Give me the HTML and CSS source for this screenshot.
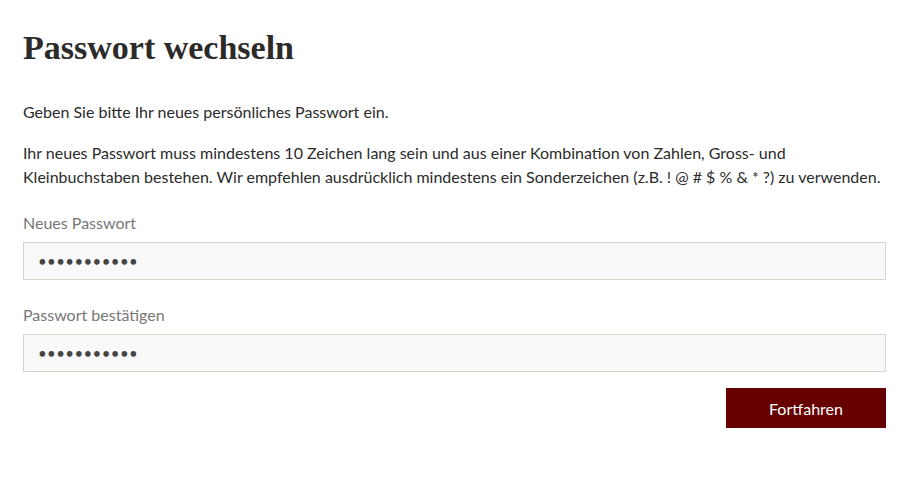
FILE: index.html
```html
<!DOCTYPE html>
<html lang="de">
<head>
<meta charset="utf-8">
<title>Passwort wechseln</title>
<link rel="stylesheet" href="styles.css">
</head>
<body>
<main class="page">
  <h1 class="title">Passwort wechseln</h1>
  <p class="intro">Geben Sie bitte Ihr neues persönliches Passwort ein.</p>
  <p class="rules">Ihr neues Passwort muss mindestens 10 Zeichen lang sein und aus einer Kombination von Zahlen, Gross- und Kleinbuchstaben bestehen. Wir empfehlen ausdrücklich mindestens ein Sonderzeichen (z.B. ! @ # $ % &amp; * ?) zu verwenden.</p>
  <form class="form">
    <label class="field">
      <span class="label">Neues Passwort</span>
      <input class="input" type="password" value="abcdefghijk">
    </label>
    <label class="field">
      <span class="label">Passwort bestätigen</span>
      <input class="input" type="password" value="abcdefghijk">
    </label>
    <div class="actions">
      <button class="btn" type="button">Fortfahren</button>
    </div>
  </form>
</main>
</body>
</html>
```

FILE: styles.css
```css
* { box-sizing: border-box; }
html, body { margin: 0; padding: 0; background: #fff; }
body {
  font-family: Lato, "Liberation Sans", sans-serif;
  font-size: 16px;
  color: #2b2b2b;
}
.page {
  padding: 28px 24px 0 23px;
}
.title {
  font-family: "Liberation Serif", "Times New Roman", serif;
  font-weight: 700;
  font-size: 34px;
  line-height: 40px;
  margin: 0 0 32px;
  color: #2d2b2a;
  letter-spacing: 0;
}
.intro {
  margin: 0 0 17px;
  line-height: 24px;
}
.rules {
  margin: 0 0 23px;
  line-height: 24px;
}
.form {
  display: flex;
  flex-direction: column;
}
.field {
  display: flex;
  flex-direction: column;
  margin-bottom: 24px;
}
.field + .field { margin-bottom: 16px; }
.label {
  color: #777;
  line-height: 22px;
  margin-bottom: 8px;
}
.input {
  height: 38px;
  border: 1px solid #d6d5cb;
  background: #f9f9f9;
  padding: 0 14px;
  font-family: Lato, "Liberation Sans", sans-serif;
  font-size: 15px;
  color: #444;
  letter-spacing: 0.4px;
  outline: none;
}
.actions {
  display: flex;
  justify-content: flex-end;
}
.btn {
  width: 160px;
  height: 40px;
  border: 0;
  background: #660000;
  color: #fff;
  font-family: Lato, "Liberation Sans", sans-serif;
  font-size: 16px;
  cursor: pointer;
}
```
